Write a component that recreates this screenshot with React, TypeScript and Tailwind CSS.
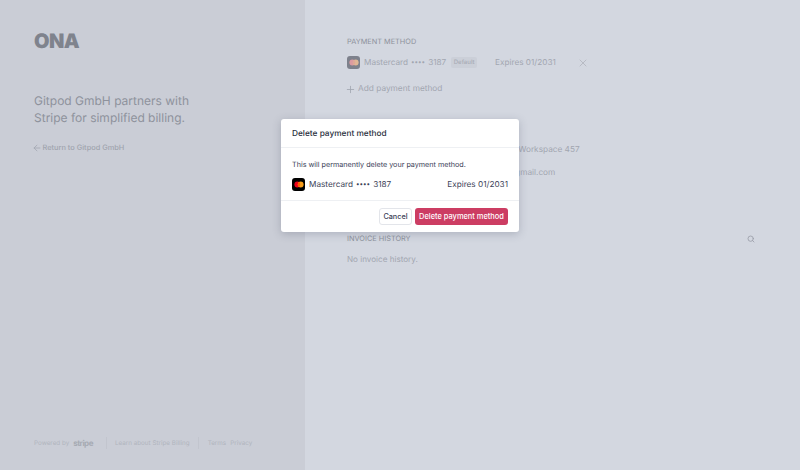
import { ArrowLeft, Plus, Search, X } from "lucide-react";

function MastercardIcon({ muted = false }: { muted?: boolean }) {
  return (
    <div className={`flex h-[13px] w-[13px] shrink-0 items-center justify-center rounded-[3px] ${muted ? "bg-[#7d818c]" : "bg-black"}`}>
      <svg width="10" height="7" viewBox="0 0 10 7">
        <circle cx="3.3" cy="3.5" r="2.9" fill={muted ? "#dc9ba2" : "#eb001b"} />
        <circle cx="6.7" cy="3.5" r="2.9" fill={muted ? "#e0b795" : "#f79e1b"} />
        <ellipse cx="5" cy="3.5" rx="1.2" ry="2.4" fill={muted ? "#e0a898" : "#ff5f00"} />
      </svg>
    </div>
  );
}

function CardName() {
  return (
    <span className="ml-[4px] flex items-center whitespace-nowrap">
      Mastercard
      <span className="mx-[3px] text-[6.3px]">••••</span>
      3187
    </span>
  );
}

export default function App() {
  return (
    <div className="relative flex h-[470px] w-[800px] overflow-hidden bg-[#d3d7e0] font-['Inter',sans-serif] antialiased [text-rendering:geometricPrecision]">
      <div className="flex w-[305px] shrink-0 flex-col bg-[#cacdd6] px-[34px] pb-[21px] pt-[29px]">
        <div className="text-[20px] font-black leading-[24px] tracking-[-0.6px] text-[#7f838d]">ONA</div>
        <p className="mt-[39px] text-[12px] leading-[17px] text-[#8e929c]">
          Gitpod GmbH partners with
          <br />
          Stripe for simplified billing.
        </p>
        <div className="mt-[16px] flex items-center text-[7.4px] font-medium leading-[12px] text-[#a0a4ae]">
          <ArrowLeft size={10} strokeWidth={1.8} className="-ml-[2px] mr-[0.5px]" />
          Return to Gitpod GmbH
        </div>
        <div className="mt-auto flex items-center whitespace-nowrap text-[6.3px] leading-[12px] text-[#b1b5be]">
          <span>Powered by</span>
          <span className="ml-[4px] text-[8px] font-bold tracking-[-0.5px] text-[#a6aab3]">stripe</span>
          <div className="ml-[13px] h-[12px] w-px bg-[#c2c5ce]" />
          <span className="ml-[8px]">Learn about Stripe Billing</span>
          <div className="ml-[8px] h-[12px] w-px bg-[#c2c5ce]" />
          <span className="ml-[9px]">Terms</span>
          <span className="ml-[4px]">Privacy</span>
        </div>
      </div>

      <div className="flex flex-1 flex-col pl-[42px] pr-[45px] pt-[35px] text-[#a2a6b0]">
        <div className="text-[7.35px] leading-[13px] text-[#8e929c]">PAYMENT METHOD</div>
        <div className="mt-[8px] flex h-[13px] items-center text-[8.2px]">
          <MastercardIcon muted />
          <CardName />
          <span className="ml-[5px] rounded-[2px] bg-[#cbcfd8] px-[2.5px] py-px text-[6.05px] font-medium leading-[9px] text-[#a8acb6]">Default</span>
          <span className="ml-[18px]">Expires 01/2031</span>
          <X size={12} strokeWidth={1.8} className="ml-[21px] text-[#b4b8c1]" />
        </div>
        <div className="mt-[14px] flex h-[13px] items-center text-[8.3px]">
          <Plus size={11} strokeWidth={1.8} className="-ml-[2px] mr-[2px]" />
          Add payment method
        </div>
        <div className="mt-[47px] flex h-[13px] items-center whitespace-nowrap pl-[143px] text-[8.25px]">Gitpod Workspace 457</div>
        <div className="mt-[10px] flex h-[13px] items-center whitespace-nowrap pl-[111px] text-[8.25px]">billing.admin@gmail.com</div>
        <div className="mt-[53px] flex items-center justify-between">
          <span className="text-[7.35px] leading-[13px] text-[#8e929c]">INVOICE HISTORY</span>
          <Search size={8} strokeWidth={2.5} className="text-[#9a9ea8]" />
        </div>
        <div className="mt-[8px] text-[8.1px] leading-[13px]">No invoice history.</div>
      </div>

      <div className="absolute left-[281px] top-[119px] w-[238px] rounded-[3px] bg-white shadow-[0_2px_8px_rgba(60,66,87,0.25)]">
        <div className="flex h-[29px] items-center border-b border-[#eef0f3] px-[11px] pt-[2px] text-[8.3px] font-medium text-[#2b3040]">Delete payment method</div>
        <div className="h-[53px] border-b border-[#eef0f3] px-[11px] pt-[11px] text-[#3c4257]">
          <p className="text-[7.2px] leading-[11px]">This will permanently delete your payment method.</p>
          <div className="mt-[8px] flex items-center text-[8.2px] leading-[13px]">
            <MastercardIcon />
            <CardName />
            <span className="ml-auto">Expires 01/2031</span>
          </div>
        </div>
        <div className="flex h-[31px] items-center justify-end gap-[3px] px-[11px]">
          <button className="h-[17px] w-[33px] rounded-[3px] border border-[#e3e5ea] bg-white text-[7.3px] font-medium leading-none text-[#3c4257]">Cancel</button>
          <button className="h-[17px] w-[93px] rounded-[3px] bg-[#cc3d63] text-[7.45px] font-medium leading-none text-white">Delete payment method</button>
        </div>
      </div>
    </div>
  );
}
